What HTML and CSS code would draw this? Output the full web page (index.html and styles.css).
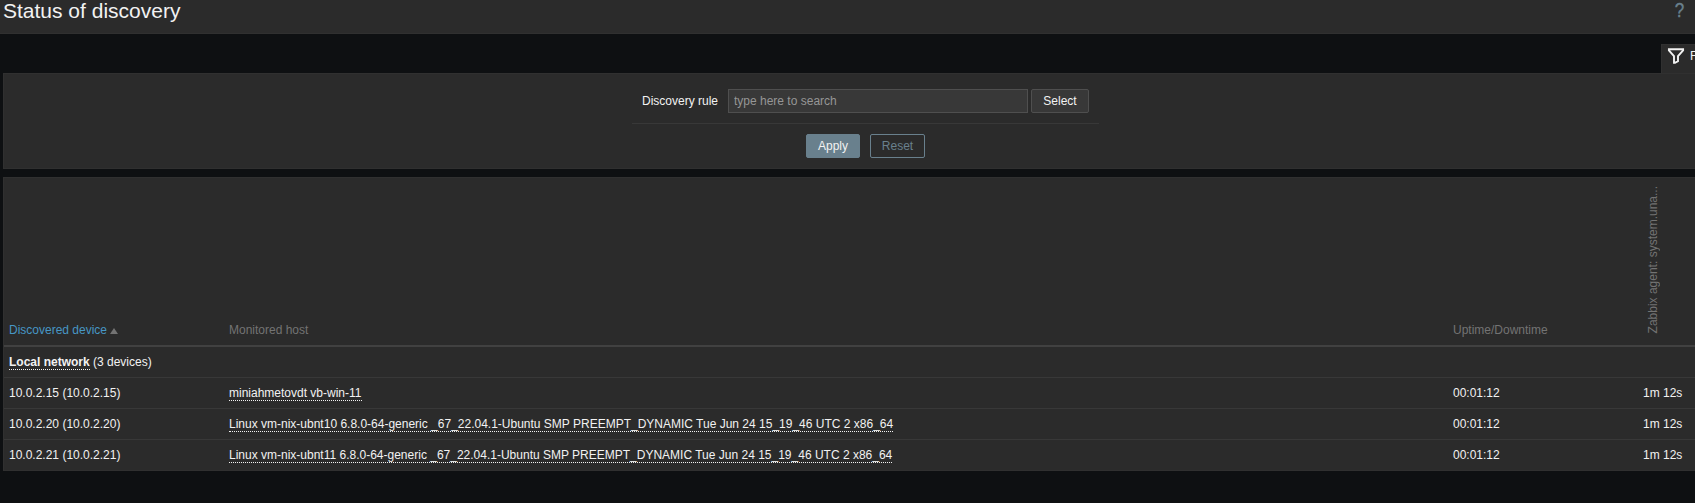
FILE: index.html
```html
<!DOCTYPE html>
<html lang="en">
<head>
<meta charset="utf-8">
<title>Status of discovery</title>
<link rel="stylesheet" href="styles.css">
</head>
<body>
<header class="header">
  <h1 class="title">Status of discovery</h1>
  <a class="help">?</a>
</header>
<main class="main">
  <div class="tabs">
    <a class="tab">
      <svg class="funnel" width="18" height="18" viewBox="0 0 18 18"><path d="M1.9 2.2H16.1V3.4L11 9.2V14.2L8 15.9H7V9.2L1.9 3.4Z" fill="none" stroke="#f2f2f2" stroke-width="1.9"/></svg>
      <span>Filter</span>
    </a>
  </div>
  <form class="filter">
    <div class="fields">
      <label class="label" for="rule">Discovery rule</label>
      <input class="input" id="rule" type="text" placeholder="type here to search">
      <button class="btn btn-grey" type="button">Select</button>
    </div>
    <div class="actions">
      <button class="btn btn-main" type="button">Apply</button>
      <button class="btn btn-alt" type="button">Reset</button>
    </div>
  </form>
  <section class="table">
    <div class="row head">
      <div><a class="sort">Discovered device<i class="arrow"></i></a></div>
      <div>Monitored host</div>
      <div>Uptime/Downtime</div>
      <div><span class="vertical">Zabbix agent: system.una...</span></div>
    </div>
    <div class="row">
      <div><a class="link strong">Local network</a> (3 devices)</div>
    </div>
    <div class="row">
      <div>10.0.2.15 (10.0.2.15)</div>
      <div><a class="link">miniahmetovdt vb-win-11</a></div>
      <div>00:01:12</div>
      <div>1m 12s</div>
    </div>
    <div class="row">
      <div>10.0.2.20 (10.0.2.20)</div>
      <div><a class="link">Linux vm-nix-ubnt10 6.8.0-64-generic _67_22.04.1-Ubuntu SMP PREEMPT_DYNAMIC Tue Jun 24 15_19_46 UTC 2 x86_64</a></div>
      <div>00:01:12</div>
      <div>1m 12s</div>
    </div>
    <div class="row">
      <div>10.0.2.21 (10.0.2.21)</div>
      <div><a class="link">Linux vm-nix-ubnt11 6.8.0-64-generic _67_22.04.1-Ubuntu SMP PREEMPT_DYNAMIC Tue Jun 24 15_19_46 UTC 2 x86_64</a></div>
      <div>00:01:12</div>
      <div>1m 12s</div>
    </div>
  </section>
</main>
</body>
</html>
```
FILE: styles.css
```css
* { box-sizing: border-box; }
body {
  margin: 0;
  height: 503px;
  overflow: hidden;
  background: #0e1012;
  color: #f2f2f2;
  font: 12px/14px "Liberation Sans", Arial, sans-serif;
  white-space: nowrap;
}
.header {
  display: flex;
  justify-content: space-between;
  height: 34px;
  padding: 0 11px 0 3px;
  background: #2b2b2b;
  border-bottom: 1px solid #303030;
}
.title { margin: 0; font-size: 21px; line-height: 22px; font-weight: 400; }
.help {
  color: #69808d;
  font-size: 20px;
  line-height: 21px;
  transform: scaleX(0.85);
  transform-origin: right;
  -webkit-text-stroke: 0.4px #69808d;
}
.main { padding-left: 3px; }
.tabs { display: flex; justify-content: flex-end; height: 39px; padding-top: 10px; overflow: hidden; }
.tab {
  display: flex;
  gap: 5px;
  width: 34px;
  height: 30px;
  padding: 3px 0 0 5px;
  overflow: hidden;
  background: #2b2b2b;
  border: 1px solid #303030;
  border-width: 1px 0 0 1px;
  line-height: 16px;
}
.funnel { flex: none; margin-top: -1px; }
.filter {
  height: 96px;
  padding-top: 15px;
  background: #2b2b2b;
  border: 1px solid #303030;
  border-right: 0;
}
.fields, .actions { display: flex; width: 467px; margin-left: 628px; }
.fields { height: 35px; padding-left: 10px; border-bottom: 1px solid #383838; }
.label { width: 86px; line-height: 24px; }
.input {
  width: 300px;
  height: 24px;
  margin-right: 3px;
  padding: 0 5px;
  background: #383838;
  border: 1px solid #4f4f4f;
  color: #f2f2f2;
  font: inherit;
}
.input::placeholder { color: #969696; }
.btn { height: 24px; padding: 0; border: 1px solid; border-radius: 2px; font: inherit; }
.btn-grey { width: 58px; background: #383838; border-color: #4f4f4f; color: #f2f2f2; }
.actions { gap: 10px; padding: 10px 0 0 174px; }
.btn-main { width: 54px; background: #69808d; border-color: #69808d; color: #f2f2f2; }
.btn-alt { width: 55px; background: transparent; border-color: #69808d; color: #69808d; }
.table { margin-top: 8px; background: #2b2b2b; border: 1px solid #303030; border-width: 1px 0 0 1px; }
.row {
  display: grid;
  grid-template-columns: 220px 1224px 190px 1fr;
  height: 31px;
  padding: 8px 0 0 5px;
  border-bottom: 1px solid #383838;
}
.row:last-child { border-color: #303030; }
.head {
  align-items: end;
  height: 169px;
  padding: 0 0 8px 5px;
  border-bottom: 2px solid #414141;
  color: #737373;
}
.sort { display: flex; align-items: center; gap: 3px; color: #4796c4; }
.arrow { margin-top: 2px; border: 4px solid transparent; border-top: 0; border-bottom: 6px solid #737373; }
.vertical {
  display: block;
  width: 14px;
  margin: 0 0 4px 3px;
  line-height: 14px;
  writing-mode: vertical-rl;
  transform: rotate(180deg);
}
.link { display: inline-block; height: 15px; border-bottom: 1px dotted #f2f2f2; }
.strong { font-weight: 700; }
```
